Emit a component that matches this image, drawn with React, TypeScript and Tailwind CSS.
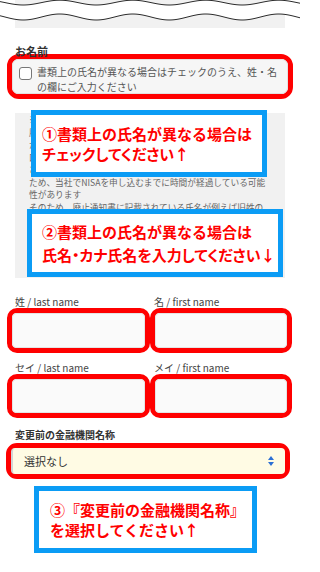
const font = { fontFamily: '"Noto Sans CJK JP", "Noto Sans", sans-serif' };

function wavePoints(base: number, amp: number, from: number, to: number, step = 2): string[] {
  const pts: string[] = [];
  for (let x = from; x <= to; x += step) {
    const y = base + amp * Math.sin(((x - 5) / 73) * Math.PI * 2);
    pts.push(`${x},${y.toFixed(2)}`);
  }
  return pts;
}

function TornEdge() {
  const top = wavePoints(2.6, 2.4, 0, 300);
  const bottom = wavePoints(17, 3, 0, 300);
  const band = `M${top.join(' L')} L${[...bottom].reverse().join(' L')} Z`;
  return (
    <svg width="300" height="28" viewBox="0 0 300 28" className="block shrink-0">
      <rect x="15" y="0" width="270" height="28" fill="#f1f1f1" />
      <path d={band} fill="#ffffff" />
      <path d={`M${top.join(' L')}`} fill="none" stroke="#2b2b2b" strokeWidth="1" />
      <path d={`M${bottom.join(' L')}`} fill="none" stroke="#2b2b2b" strokeWidth="1" />
    </svg>
  );
}

function Note({ lines, leading, className }: { lines: string[]; leading: string; className: string }) {
  return (
    <div
      className={`absolute flex flex-col justify-center border-[5px] border-[#0b9cf5] bg-white pl-[6px] text-[15px] font-bold text-[#ff0000] ${leading} ${className}`}
    >
      {lines.map((l, i) => (
        <span key={l} className={i === 1 ? 'whitespace-nowrap [font-feature-settings:"palt"]' : 'whitespace-nowrap'}>
          {l}
        </span>
      ))}
    </div>
  );
}

function UpDown() {
  return (
    <svg width="8" height="12" viewBox="0 0 8 12">
      <path d="M4 1 L7 5 L1 5 Z" fill="#2b6fd4" />
      <path d="M4 11 L7 7 L1 7 Z" fill="#2b6fd4" />
    </svg>
  );
}

const grayLines = [
  '※ご注意ください',
  '廃止通知書は、以前NISA口座を開設していた金融機関',
  'から発行されます。廃止通知書の発行から当社にNISA',
  '口座を申し込むまでの間に、婚姻等により氏名が変更',
  'されている場合があります。廃止通知書を受け取って',
  'ため、当社でNISAを申し込むまでに時間が経過している可能',
  '性があります',
  'そのため、廃止通知書に記載されている氏名が例えば旧姓の',
  'ままとなっている場合には、廃止通知書に記載の氏名を',
  '下記にご入力ください。ご入力いただいた氏名をもとに',
  '税務署へ確認を行います。',
  '氏名が同じ場合は入力不要です。',
];

export default function App() {
  return (
    <div className="relative h-[572px] w-[300px] overflow-hidden bg-white text-[#333]" style={font}>
      <TornEdge />

      <div className="mt-[17px] px-[15px] text-[11px] font-bold leading-[12px] text-[#333]">お名前</div>
      <div className="mx-[7px] -mt-[3px] h-[45px] rounded-[12px] border-[5px] border-[#ff0000]">
        <div className="flex h-full items-start rounded-[6px] border border-[#e2e2e2] bg-[#f6f6f6] pl-[6px] pt-[4px]">
          <span className="mt-[3px] h-[13px] w-[13px] shrink-0 rounded-[3px] border border-[#777] bg-white" />
          <p className="ml-[5px] text-[10px] leading-[15px] text-[#555]">
            書類上の氏名が異なる場合はチェックのうえ、姓・名
            <br />
            の欄にご入力ください
          </p>
        </div>
      </div>

      <div className="mx-[15px] mt-[14px] h-[165px] overflow-hidden bg-[#f1f1f1] pl-[14px] pt-[1px] text-[8.7px] leading-[12.5px] text-[#666]">
        {grayLines.map((l) => (
          <div key={l} className="whitespace-nowrap">
            {l}
          </div>
        ))}
      </div>

      <div className="mt-[18px] grid grid-cols-[143px_142px] px-[7px] text-[10px] leading-[12px] text-[#444]">
        <span className="pl-[8px]">姓 / last name</span>
        <span className="pl-[4px]">名 / first name</span>
      </div>
      <div className="grid grid-cols-[143px_142px] px-[7px]">
        <div className="h-[45px] rounded-[10px] border-[5px] border-[#ff0000]">
          <div className="h-full rounded-[4px] border border-[#e4e4e4] bg-[#fafafa]" />
        </div>
        <div className="h-[45px] rounded-[10px] border-[5px] border-[#ff0000]">
          <div className="h-full rounded-[4px] border border-[#e4e4e4] bg-[#fafafa]" />
        </div>
      </div>

      <div className="mt-[9px] grid grid-cols-[143px_142px] px-[7px] text-[10px] leading-[12px] text-[#444]">
        <span className="pl-[8px]">セイ / last name</span>
        <span className="pl-[4px]">メイ / first name</span>
      </div>
      <div className="grid grid-cols-[143px_142px] px-[7px]">
        <div className="h-[44px] rounded-[10px] border-[5px] border-[#ff0000]">
          <div className="h-full rounded-[4px] border border-[#e4e4e4] bg-[#fafafa]" />
        </div>
        <div className="h-[44px] rounded-[10px] border-[5px] border-[#ff0000]">
          <div className="h-full rounded-[4px] border border-[#e4e4e4] bg-[#fafafa]" />
        </div>
      </div>

      <div className="mt-[11px] px-[15px] text-[10px] font-semibold leading-[12px] text-[#333]">
        変更前の金融機関名称
      </div>
      <div className="ml-[6px] mt-[2px] h-[36px] w-[284px] rounded-[11px] border-[5px] border-[#ff0000]">
        <div className="flex h-full items-center justify-between rounded-[4px] border-l-2 border-[#d4d4d4] bg-[#fffbe4] pl-[11px] pr-[10px] text-[11px] text-[#333]">
          <span>選択なし</span>
          <UpDown />
        </div>
      </div>

      <div className="ml-[34px] mt-[7px] flex h-[67px] w-[223px] flex-col justify-center border-[5px] border-[#0b9cf5] bg-white pl-[11px] text-[15px] font-bold leading-[20px] text-[#ff0000]">
        <span className="whitespace-nowrap">③『変更前の金融機関名称』</span>
        <span className="whitespace-nowrap">を選択してください↑</span>
      </div>

      <Note
        lines={['①書類上の氏名が異なる場合は', 'チェックしてください↑']}
        leading="leading-[20px]"
        className="left-[31px] top-[110px] h-[67px] w-[236px]"
      />
      <Note
        lines={['②書類上の氏名が異なる場合は', '氏名・カナ氏名を入力してください↓']}
        leading="leading-[23px]"
        className="left-[27px] top-[209px] h-[68px] w-[256px] pl-[10px]"
      />
    </div>
  );
}
